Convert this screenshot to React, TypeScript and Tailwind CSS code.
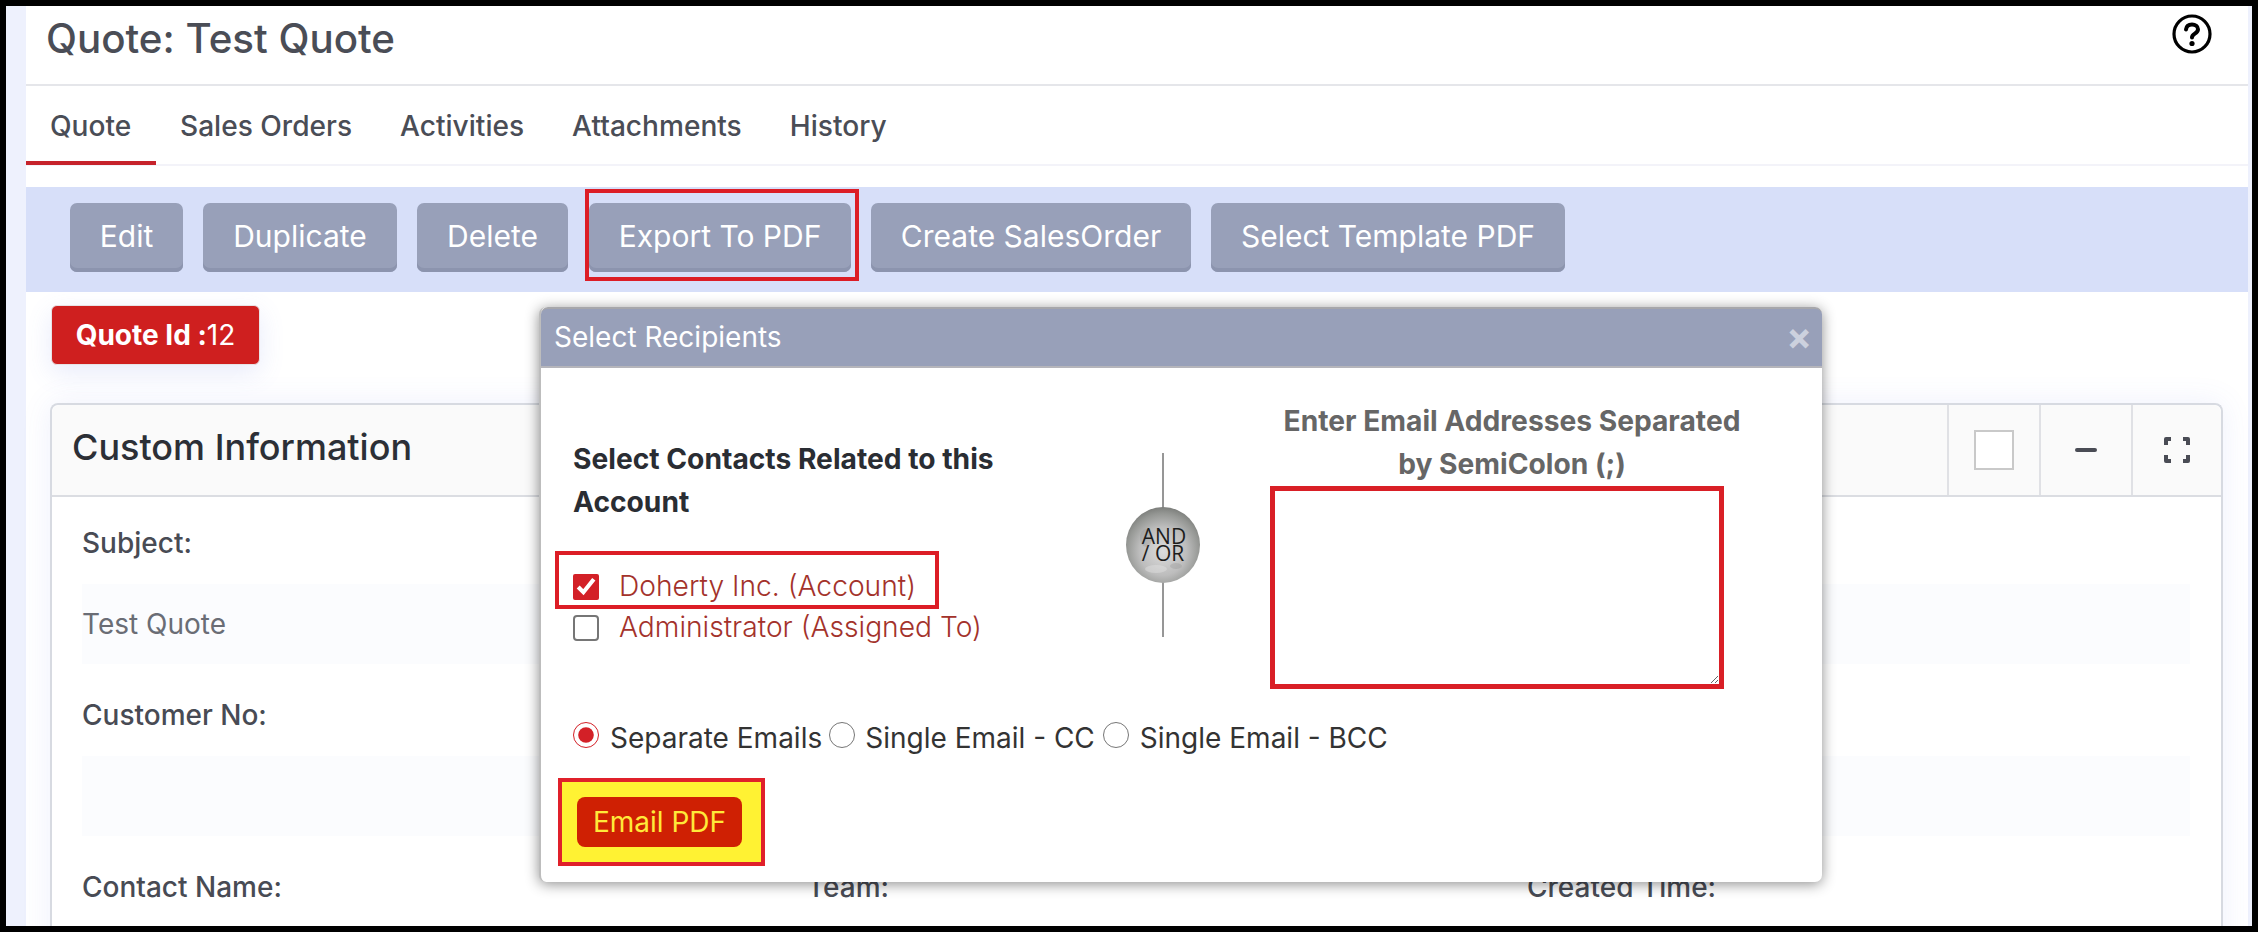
import React from "react";

const Btn = ({ label, w }: { label: string; w: string }) => (
  <div className={`relative h-[69px] ${w} flex items-center justify-center rounded-[7px] bg-[#98a0b9] text-[30px] text-white shadow-[inset_0_-4px_0_#8c94ae]`}>
    <span className="-mt-[2px]">{label}</span>
  </div>
);

const Fullscreen = () => (
  <svg width="26" height="26" viewBox="0 0 26 26" fill="none" stroke="#4a4c55" strokeWidth="4" strokeLinejoin="round">
    <path d="M2 8V2h5M19 2h5v6M24 18v6h-5M7 24H2v-6" />
  </svg>
);

const Help = () => (
  <svg width="40" height="40" viewBox="0 0 40 40" fill="none" stroke="#000" strokeWidth="3.200">
    <circle cx="20" cy="20" r="18" />
    <path d="M14 15.500c.4-3.300 3-5 6-5 3.400 0 6 2 6 4.800 0 4.500-6 4.200-6 8.200" strokeWidth="4" strokeLinecap="round" />
    <circle cx="20" cy="29.500" r="2.600" fill="#000" stroke="none" />
  </svg>
);

const AndOr = () => (
  <svg width="74" height="184" viewBox="0 0 74 184" className="shrink-0">
    <defs>
      <radialGradient id="ball" cx="50%" cy="58%" r="58%">
        <stop offset="0%" stopColor="#dcdcdc" />
        <stop offset="55%" stopColor="#bdbdbd" />
        <stop offset="85%" stopColor="#959794" />
        <stop offset="100%" stopColor="#7c7e7b" />
      </radialGradient>
    </defs>
    <line x1="37" y1="0" x2="37" y2="184" stroke="#2e2e2e" strokeWidth="1" />
    <ellipse cx="37" cy="92" rx="37" ry="38" fill="url(#ball)" />
    <ellipse cx="20" cy="85" rx="6" ry="9" fill="#9c9c9c" opacity="0.4" />
    <ellipse cx="30" cy="116" rx="11" ry="4" fill="#e6e6e6" opacity="0.4" />
    <ellipse cx="50" cy="113" rx="6" ry="3" fill="#8f8f8f" opacity="0.3" />
    <text textAnchor="middle" fontFamily="'Open Sans', sans-serif" fontSize="21" fill="#1d1d1d">
      <tspan x="38" y="91">AND</tspan>
      <tspan x="37" y="108">/ OR</tspan>
    </text>
  </svg>
);

const Field = ({ label, value }: { label: string; value?: string }) => (
  <div className="flex flex-col">
    <div className="h-[57px] leading-[32px] font-medium text-[#484b54]">{label}</div>
    <div className="flex h-[80px] items-center bg-[#fbfcfe] text-[#6a6d75]">{value}</div>
  </div>
);

export default function App() {
  return (
    <div className="h-[932px] w-[2258px] overflow-hidden bg-black py-[6px] pl-[6px] pr-[6px] font-['Inter',sans-serif]">
      <div className="h-[920px] overflow-hidden bg-[#eef1fd] pl-[20px] pr-[4px]">
        <div className="relative h-full bg-white">
          {/* title */}
          <div className="flex h-[80px] items-start justify-between border-b-2 border-[#e5e6ea] pr-[36px]">
            <h1 className="pl-[20px] pt-[11px] text-[40.3px] leading-[44px] font-medium text-[#4a4d56]">Quote: Test Quote</h1>
            <div className="pt-[8px]">
              <Help />
            </div>
          </div>

          {/* tabs */}
          <div className="flex h-[80px] items-start border-b-2 border-[#f3f3f9] text-[28.1px] font-medium text-[#4a4d56]">
            <div className="h-[79px] w-[130px] border-b-[4px] border-[#c6232b] pl-[24px] pt-[22px] leading-[36px]">Quote</div>
            <div className="flex gap-[48px] pl-[24px] pt-[22px] leading-[36px]">
              <span>Sales Orders</span>
              <span>Activities</span>
              <span>Attachments</span>
              <span>History</span>
            </div>
          </div>

          {/* toolbar */}
          <div className="mt-[21px] flex h-[105px] items-start gap-[20px] bg-[#d7dff9] pl-[44px] pt-[16px]">
            <Btn label="Edit" w="w-[113px]" />
            <Btn label="Duplicate" w="w-[194px]" />
            <Btn label="Delete" w="w-[151px]" />
            <div className="relative ml-[1px]">
              <Btn label="Export To PDF" w="w-[262px]" />
              <div className="absolute -bottom-[9px] -left-[4px] -right-[8px] -top-[14px] border-4 border-[#dc1d26]" />
            </div>
            <Btn label="Create SalesOrder" w="w-[320px]" />
            <Btn label="Select Template PDF" w="w-[354px]" />
          </div>

          {/* badge */}
          <div className="ml-[25px] mt-[13px] flex h-[60px] w-[209px] items-center justify-center rounded-[6px] border border-[#e7e3e6] bg-[#cf1f1f] text-[28px] text-white shadow-[0_8px_26px_rgba(90,110,230,0.14)]">
            <span className="font-bold">Quote Id :</span>
            <span>12</span>
          </div>

          {/* card */}
          <div className="ml-[24px] mr-[25px] mt-[38px] h-[560px] rounded-t-[8px] border-2 border-b-0 border-[#d7dae1] text-[28px] shadow-[0_0_30px_rgba(90,110,230,0.10)]">
            <div className="flex h-[92px] items-stretch rounded-t-[8px] border-b-2 border-[#dbdde2] bg-[#fafafa]">
              <div className="flex-1 pl-[20px] pt-[20px] text-[36px] leading-[44px] font-medium text-[#2c2f36]">Custom Information</div>
              <div className="flex w-[92px] items-center justify-center border-l-2 border-[#e0e1e5]">
                <div className="h-[40px] w-[40px] border-2 border-[#c9c9c9] bg-white" />
              </div>
              <div className="flex w-[92px] items-center justify-center border-l-2 border-[#e0e1e5]">
                <div className="h-[4px] w-[22px] rounded-full bg-[#4a4c55]" />
              </div>
              <div className="flex w-[90px] items-center justify-center border-l-2 border-[#e0e1e5]">
                <Fullscreen />
              </div>
            </div>
            <div className="pl-[30px] pr-[31px] pt-[30px]">
              <div className="flex flex-col gap-[35px]">
                <Field label="Subject:" value="Test Quote" />
                <Field label="Customer No:" />
              </div>
              <div className="mt-[35px] grid grid-cols-[725px_720px_1fr] leading-[32px] font-medium text-[#484b54]">
                <span>Contact Name:</span>
                <span>Team:</span>
                <span>Created Time:</span>
              </div>
            </div>
          </div>

          {/* modal */}
          <div className="absolute left-[513px] top-[301px] h-[575px] w-[1283px] rounded-[7px] border-l-2 border-[#bdbdbd] bg-white shadow-[0_2px_14px_rgba(0,0,0,0.45)]">
            <div className="flex h-[61px] items-center justify-between rounded-t-[7px] border-y-2 border-b-[#b5b5bb] border-t-[#a7a7ab] bg-[#98a0b9] pl-[13px] pr-[10px] text-[28px] text-white">
              <span className="-mt-[2px]">Select Recipients</span>
              <span className="-mt-[3px] text-[38px] font-bold leading-none text-[#ccd1de]">×</span>
            </div>
            <div className="flex items-start">
              <div className="ml-[32px] w-[450px] pt-[70px] text-[28.2px] leading-[43px]">
                <div className="font-bold text-[#2a2d33]">Select Contacts Related to this Account</div>
                <div className="relative mt-[41px] flex h-[43px] items-center gap-[20px] font-light text-[#a3322b]">
                  <input type="checkbox" checked readOnly className="m-0 h-[26px] w-[26px] accent-[#d32027]" />
                  <span>Doherty Inc. (Account)</span>
                  <div className="absolute -bottom-[1px] -left-[18px] -top-[14px] w-[384px] border-4 border-[#dc1d26]" />
                </div>
                <div className="-mt-[2px] flex h-[43px] items-center gap-[20px] font-light text-[#a3322b]">
                  <input type="checkbox" readOnly className="m-0 h-[26px] w-[26px] appearance-none rounded-[4px] border-2 border-[#767676] bg-white" />
                  <span>Administrator (Assigned To)</span>
                </div>
              </div>
              <div className="ml-[103px] mt-[85px]">
                <AndOr />
              </div>
              <div className="ml-[70px] flex flex-col">
                <div className="ml-[2px] w-[480px] pt-[32px] text-center text-[28.2px] leading-[43px] font-bold text-[#666]">
                  Enter Email Addresses Separated by SemiColon (;)
                </div>
                <textarea readOnly className="block h-[203px] w-[454px] border-[5px] border-[#d91f26] bg-white outline-none" />
              </div>
            </div>
            <div className="ml-[32px] mt-[27px] flex h-[43px] items-center text-[28px] text-[#333]">
              <input type="radio" name="mode" checked readOnly className="m-0 -mt-[6px] h-[26px] w-[26px] accent-[#d32027]" />
              <span className="ml-[11px]">Separate Emails</span>
              <input type="radio" name="mode" readOnly className="m-0 -mt-[6px] ml-[7px] h-[26px] w-[26px]" />
              <span className="ml-[10px]">Single Email - CC</span>
              <input type="radio" name="mode" readOnly className="m-0 -mt-[6px] ml-[8px] h-[26px] w-[26px]" />
              <span className="ml-[11px]">Single Email - BCC</span>
            </div>
            <div className="ml-[17px] mt-[19px] flex h-[88px] w-[207px] items-center justify-start border-4 border-[#e0202a] bg-[#fff233] pl-[15px]">
              <div className="flex h-[50px] w-[165px] items-center justify-center rounded-[8px] bg-[#cf2003] text-[28px] text-[#ffe93a]">Email PDF</div>
            </div>
          </div>
        </div>
      </div>
    </div>
  );
}
